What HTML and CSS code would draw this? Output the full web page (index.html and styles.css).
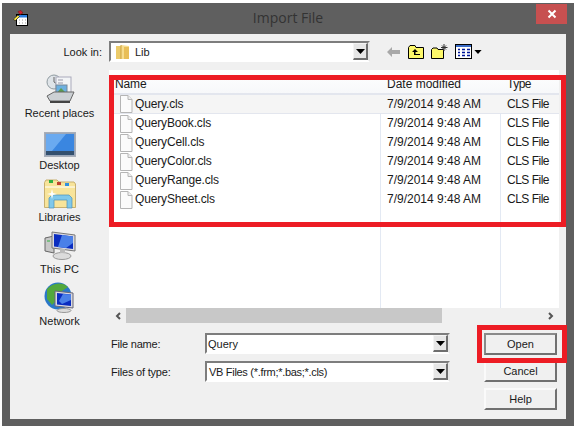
FILE: index.html
```html
<!DOCTYPE html>
<html lang="en">
<head>
  <meta charset="UTF-8">
  <title>Import File</title>
  <link rel="stylesheet" href="styles.css">
</head>
<body>
  <svg class="defs" width="0" height="0">
    <symbol id="file" viewBox="0 0 14 18">
      <path d="M1.5 .5H9L13 4.5V17.5H1.5Z" fill="#fbfbfb" stroke="#b5b5b5"/>
      <path d="M9 .5V4.5H13" fill="#eee" stroke="#b5b5b5"/>
    </symbol>
    <symbol id="arrow" viewBox="0 0 9 5">
      <path d="M0 0H9L4.5 5Z" fill="#000"/>
    </symbol>
  </svg>

  <div class="window">
    <!-- Title bar -->
    <div class="titlebar">
      <svg class="app-icon" width="16" height="16" viewBox="0 0 16 16">
        <rect x="3.5" y="4.5" width="11" height="11" fill="#fff" stroke="#000"/>
        <rect x="4" y="5" width="10" height="2.5" fill="#2a7de0"/>
        <path d="M6 10h1M9 10h1M12 10h1M6 13h1M9 13h1M12 13h1" stroke="#999"/>
        <path d="M5 1.5L8 .5L10 3L7 4.5Z" fill="#d02030" stroke="#701010" stroke-width=".5"/>
        <path d="M.5 9L5 5L6.5 6.5L2 11Z" fill="#f5e040" stroke="#222" stroke-width=".7"/>
      </svg>
      <span class="title">Import File</span>
      <div class="close">
        <svg width="10" height="10" viewBox="0 0 10 10"><path d="M1.5 1.5L8.5 8.5M8.5 1.5L1.5 8.5" stroke="#fff" stroke-width="2"/></svg>
      </div>
    </div>

    <div class="client">
      <!-- Look in row -->
      <div class="toolbar">
        <label class="look-label">Look in:</label>
        <div class="combo look-combo">
          <svg class="lib-folder" width="14" height="16" viewBox="0 0 14 16">
            <path d="M0 2H5V15H0Z" fill="#eccb6a"/>
            <path d="M5 1L13 2V15L5 15Z" fill="#f6dc8e"/>
            <path d="M8 3L13 3V15H8Z" fill="#e8be58"/>
            <path d="M5 1V15" stroke="#c9a040"/>
          </svg>
          <span class="combo-text">Lib</span>
          <span class="combo-btn"><svg width="9" height="5"><use href="#arrow"/></svg></span>
        </div>
        <div class="tools">
          <svg width="13" height="10" viewBox="0 0 13 10"><path d="M0 5L5 0V3H13V7H5V10Z" fill="#a8a8a8"/></svg>
          <svg class="tool-up" width="16" height="15" viewBox="0 0 16 15">
            <path d="M.5 14.5V3.5L2 1.5H7L8 3.5H15.5V14.5Z" fill="#fdf86a" stroke="#000"/>
            <path d="M7 5L4 8H6V11H12V10H7.5V8H10Z" fill="#000"/>
          </svg>
          <svg class="tool-new" width="17" height="15" viewBox="0 0 17 15">
            <path d="M.5 14.5V5.5L2 4H6L7 5.5H12.5V14.5Z" fill="#fdf86a" stroke="#000"/>
            <path d="M13 0V7M10 3.5H16.5M11 1.5L15 5.5M15 1.5L11 5.5" stroke="#333"/>
          </svg>
          <svg class="tool-view" width="17" height="15" viewBox="0 0 17 15">
            <rect x=".5" y=".5" width="16" height="14" fill="#fff" stroke="#000"/>
            <rect x="1" y="1" width="15" height="2" fill="#3a6cc8"/>
            <path d="M3 5.5h2M7 5.5h3M12 5.5h3M3 8.5h2M7 8.5h3M12 8.5h3M3 11.5h2M7 11.5h3M12 11.5h3" stroke="#00189a" stroke-width="1.4"/>
          </svg>
          <svg width="8" height="4"><use href="#arrow"/></svg>
        </div>
      </div>

      <div class="body">
        <!-- Places -->
        <div class="places">
          <div class="place">
            <svg width="32" height="32" viewBox="0 0 32 32">
              <circle cx="10" cy="9" r="7" fill="#dfe4e8" stroke="#8f9aa0"/>
              <path d="M10 4V9L13 11" fill="none" stroke="#666"/>
              <rect x="12" y="4" width="15" height="17" fill="#f2f4f6" stroke="#aab"/>
              <path d="M14 7h5M14 10h5" stroke="#99a"/>
              <rect x="12" y="12" width="11" height="10" fill="#6cb0e0" stroke="#789"/>
              <path d="M12 21L17 15L23 21Z" fill="#5a9a50"/>
              <path d="M3 23L10 19H30L26 28H6Z" fill="#ccd0d4" stroke="#666"/>
              <path d="M6 28H26V30H6Z" fill="#444"/>
            </svg>
            <span>Recent places</span>
          </div>
          <div class="place">
            <svg width="32" height="32" viewBox="0 0 32 32">
              <rect x=".5" y="7.5" width="31" height="24" fill="#9aa6b8" stroke="#a8aeb8"/>
              <rect x="2" y="9" width="28" height="17" fill="#3a86e0"/>
              <path d="M2 9H22L8 26H2Z" fill="#6aaaf0"/>
              <rect x="2" y="26" width="28" height="4" fill="#34506e"/>
            </svg>
            <span>Desktop</span>
          </div>
          <div class="place">
            <svg width="32" height="32" viewBox="0 0 32 32">
              <path d="M.5 30.5V5.5L2 3H13L15 5H30L31.5 7V30.5Z" fill="#f8e49a" stroke="#c8b070"/>
              <rect x="5" y="3" width="4" height="3" fill="#30b040"/>
              <rect x="13" y="5" width="4" height="3" fill="#c04030"/>
              <rect x="21" y="6" width="4" height="3" fill="#3090e0"/>
              <path d="M1 10H31" stroke="#fff"/>
              <path d="M5 31V21L8 18H25L28 21V31H23V23H10V31Z" fill="#80c8ea" stroke="#4a90b8" stroke-width=".7"/>
              <path d="M8 12L9 16L13 17L9 18L8 22L7 18L3 17L7 16Z" fill="#fff"/>
            </svg>
            <span>Libraries</span>
          </div>
          <div class="place">
            <svg width="32" height="32" viewBox="0 0 32 32">
              <path d="M1 9L10 7V24L1 22Z" fill="#c8c8c8" stroke="#666"/>
              <path d="M3 12h3" stroke="#30b040"/>
              <path d="M8 3L31 6V22L8 19Z" fill="#d8d8e0" stroke="#777"/>
              <path d="M10 5L29 7.5V20L10 17.5Z" fill="#0a2cc0"/>
              <path d="M18 6L29 7.5V14L22 19L14 18Z" fill="#4a80e8"/>
              <ellipse cx="18" cy="27" rx="9" ry="3.5" fill="#dcdcdc" stroke="#999"/>
              <path d="M16 20H21V24H16Z" fill="#bbb"/>
            </svg>
            <span>This PC</span>
          </div>
          <div class="place">
            <svg width="32" height="32" viewBox="0 0 32 32">
              <circle cx="14" cy="15" r="13.5" fill="#2a78c8"/>
              <path d="M3 8C8 2 18 0 24 6L18 10L16 16L8 24L3 18Z" fill="#52a83c"/>
              <path d="M11 10L29 12V27L11 25Z" fill="#d8d8e0" stroke="#667"/>
              <path d="M13 12L27 13.5V25L13 23.5Z" fill="#0a2cc0"/>
              <path d="M19 13L27 13.5V19L18 23L15 20Z" fill="#4a80e8"/>
              <ellipse cx="20" cy="29.5" rx="7" ry="2" fill="#dcdcdc" stroke="#999"/>
            </svg>
            <span>Network</span>
          </div>
        </div>

        <div class="main">
          <!-- File list -->
          <div class="list">
            <svg class="sort-arrow" width="7" height="4" viewBox="0 0 7 4"><path d="M0 4L3.5 0L7 4Z" fill="#a9c4d8"/></svg>
            <div class="row head">
              <span class="col-name head-name">Name</span>
              <span class="col-date">Date modified</span>
              <span class="col-type">Type</span>
            </div>
            <div class="row hot">
              <span class="col-name"><svg class="file-icon" width="14" height="18"><use href="#file"/></svg>Query.cls</span>
              <span class="col-date">7/9/2014 9:48 AM</span>
              <span class="col-type">CLS File</span>
            </div>
            <div class="row">
              <span class="col-name"><svg class="file-icon" width="14" height="18"><use href="#file"/></svg>QueryBook.cls</span>
              <span class="col-date">7/9/2014 9:48 AM</span>
              <span class="col-type">CLS File</span>
            </div>
            <div class="row">
              <span class="col-name"><svg class="file-icon" width="14" height="18"><use href="#file"/></svg>QueryCell.cls</span>
              <span class="col-date">7/9/2014 9:48 AM</span>
              <span class="col-type">CLS File</span>
            </div>
            <div class="row">
              <span class="col-name"><svg class="file-icon" width="14" height="18"><use href="#file"/></svg>QueryColor.cls</span>
              <span class="col-date">7/9/2014 9:48 AM</span>
              <span class="col-type">CLS File</span>
            </div>
            <div class="row">
              <span class="col-name"><svg class="file-icon" width="14" height="18"><use href="#file"/></svg>QueryRange.cls</span>
              <span class="col-date">7/9/2014 9:48 AM</span>
              <span class="col-type">CLS File</span>
            </div>
            <div class="row">
              <span class="col-name"><svg class="file-icon" width="14" height="18"><use href="#file"/></svg>QuerySheet.cls</span>
              <span class="col-date">7/9/2014 9:48 AM</span>
              <span class="col-type">CLS File</span>
            </div>
          </div>
          <div class="scrollbar">
            <span class="scroll-btn"><svg width="6" height="8" viewBox="0 0 6 8"><path d="M5 1L2 4L5 7" fill="none" stroke="#555" stroke-width="2"/></svg></span>
            <div class="thumb"></div>
            <span class="scroll-btn"><svg width="6" height="8" viewBox="0 0 6 8"><path d="M1 1L4 4L1 7" fill="none" stroke="#555" stroke-width="2"/></svg></span>
          </div>

          <!-- Name and type fields -->
          <div class="form">
            <div class="fields">
              <div class="field">
                <label>File name:</label>
                <div class="combo">
                  <span class="combo-text">Query</span>
                  <span class="combo-btn"><svg width="9" height="5"><use href="#arrow"/></svg></span>
                </div>
              </div>
              <div class="field">
                <label>Files of type:</label>
                <div class="combo">
                  <span class="combo-text type-text">VB Files (*.frm;*.bas;*.cls)</span>
                  <span class="combo-btn"><svg width="9" height="5"><use href="#arrow"/></svg></span>
                </div>
              </div>
            </div>
            <div class="buttons">
              <button class="open">Open</button>
              <button>Cancel</button>
              <button class="help">Help</button>
            </div>
          </div>
        </div>
      </div>
    </div>
  </div>

  <!-- Red annotations -->
  <div class="mark mark-list"></div>
  <div class="mark mark-open"></div>
</body>
</html>
```

FILE: styles.css
```css
body {
  margin: 0;
  background-color: #fff;
  font-family: "Liberation Sans", Arial, sans-serif;
  font-size: 11px;
  color: #1a1a1a;
}

.defs {
  position: absolute;
}

.window {
  box-sizing: border-box;
  width: 572px;
  height: 423px;
  margin: 3px 0 0 2px;
  padding: 0 8px 7px 8px;
  background-color: #5f5f5f;
  display: flex;
  flex-direction: column;
}

.titlebar {
  height: 31px;
  flex: none;
  display: flex;
  align-items: center;
  position: relative;
}

.app-icon {
  margin: -1px 0 0 3px;
}

.title {
  position: absolute;
  left: 3px;
  right: 3px;
  top: 5px;
  text-align: center;
  font-family: "Open Sans", sans-serif;
  font-size: 14px;
  line-height: 20px;
  color: #333;
}

.close {
  position: absolute;
  top: 1px;
  right: -1px;
  width: 31px;
  height: 20px;
  background-color: #c75050;
  display: flex;
  align-items: center;
  justify-content: center;
}

.client {
  flex: 1;
  background-color: #f0f0f0;
  display: flex;
  flex-direction: column;
}

.toolbar {
  display: flex;
  align-items: center;
  padding-top: 7px;
  margin-bottom: 8px;
}

.look-label {
  width: 92px;
  padding-right: 7px;
  text-align: right;
}

.combo {
  box-sizing: border-box;
  width: 245px;
  height: 21px;
  display: flex;
  align-items: center;
  background-color: #fff;
  border: 2px solid #7d7d7d;
  border-right-color: #e8e8e8;
  border-bottom-color: #fff;
}

.look-combo {
  width: 261px;
}

.lib-folder {
  margin: 0 4px 0 5px;
  flex: none;
}

.combo-text {
  flex: 1;
  padding-left: 1px;
}

.type-text {
  padding-left: 2px;
  letter-spacing: -0.3px;
}

.combo-btn {
  box-sizing: border-box;
  width: 15px;
  height: 17px;
  background-color: #e6e6e6;
  border: 1px solid #f4f4f4;
  border-right: 2px solid #6e6e6e;
  border-bottom: 2px solid #6e6e6e;
  display: flex;
  align-items: center;
  justify-content: center;
}

.tools {
  display: flex;
  align-items: center;
  margin-left: 17px;
}

.tool-up {
  margin-left: 8px;
}

.tool-new {
  margin-left: 7px;
}

.tool-view {
  margin-left: 7px;
  margin-right: 2px;
}

.body {
  flex: 1;
  display: flex;
}

.places {
  width: 99px;
  flex: none;
}

.place {
  height: 52px;
  padding-top: 3px;
  box-sizing: border-box;
  display: flex;
  flex-direction: column;
  align-items: center;
  text-align: center;
  line-height: 16px;
}

.main {
  width: 450px;
}

.list {
  position: relative;
  box-sizing: border-box;
  height: 238px;
  font-size: 12px;
  background-color: #fff;
  background-image: linear-gradient(#e3e9f3, #e3e9f3), linear-gradient(#e3e9f3, #e3e9f3);
  background-size: 1px 100%;
  background-position: 271px 0, 391px 0;
  background-repeat: no-repeat;
}

.sort-arrow {
  position: absolute;
  left: 133px;
  top: 1px;
}

.row {
  display: flex;
  height: 19px;
  align-items: center;
  line-height: 19px;
}

.head {
  height: 25px;
  padding-top: 5px;
  box-sizing: border-box;
  background-image: linear-gradient(#fff, #f7f8fa);
  border-bottom: 2px solid #e3e6ee;
  position: relative;
}

.hot {
  height: 18px;
  background-color: #f5f5f5;
  border-bottom: 1px solid #e3e6ee;
}

.col-name {
  width: 278px;
  padding-left: 10px;
  box-sizing: border-box;
  display: flex;
  align-items: center;
  letter-spacing: -0.15px;
}

.head-name {
  padding-left: 6px;
}

.file-icon {
  margin-right: 2px;
  flex: none;
}

.col-date {
  width: 120px;
}

.col-type {
  letter-spacing: -0.5px;
}

.scrollbar {
  height: 15px;
  display: flex;
}

.scroll-btn {
  width: 17px;
  flex: none;
  display: flex;
  align-items: center;
  justify-content: center;
}

.thumb {
  width: 316px;
  background-color: #c8c8c8;
}

.scrollbar .scroll-btn:last-child {
  margin-left: auto;
}

.form {
  display: flex;
  padding-top: 10px;
}

.fields {
  width: 341px;
  flex: none;
  display: flex;
  flex-direction: column;
  gap: 7px;
}

.field {
  display: flex;
  align-items: center;
}

.field label {
  width: 96px;
  padding-left: 2px;
  box-sizing: border-box;
  letter-spacing: -0.2px;
}

.buttons {
  margin-left: 34px;
  display: flex;
  flex-direction: column;
  gap: 5px;
}

button {
  box-sizing: border-box;
  width: 73px;
  height: 22px;
  padding: 0;
  font-family: "Liberation Sans", Arial, sans-serif;
  font-size: 11px;
  color: #1a1a1a;
  background-color: #f0f0f0;
  border: 2px solid #fafafa;
  border-right-color: #707070;
  border-bottom-color: #707070;
}

.open {
  border: 2px solid #707070;
  border-top-color: #8a8a8a;
  border-left-color: #8a8a8a;
}

.help {
  margin-top: 1px;
}

.mark {
  position: absolute;
  box-sizing: border-box;
  border: 5px solid #ed1c24;
}

.mark-list {
  left: 109px;
  top: 75px;
  width: 457px;
  height: 152px;
}

.mark-open {
  left: 477px;
  top: 325px;
  width: 90px;
  height: 38px;
}
```
